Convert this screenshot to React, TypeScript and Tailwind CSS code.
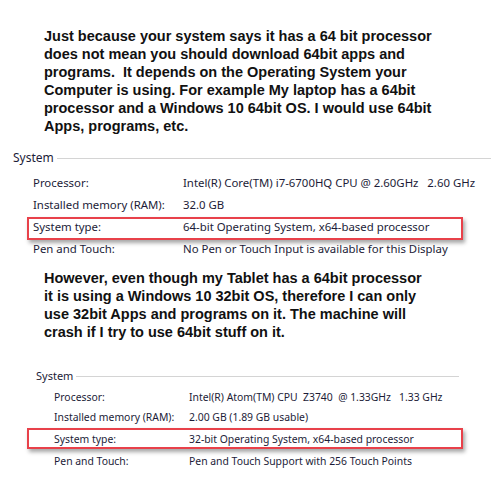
const intro = [
  "Just because your system says it has a 64 bit processor",
  "does not mean you should download 64bit apps and",
  "programs.  It depends on the Operating System your",
  "Computer is using. For example My laptop has a 64bit",
  "processor and a Windows 10 64bit OS. I would use 64bit",
  "Apps, programs, etc.",
];

const tablet = [
  "However, even though my Tablet has a 64bit processor",
  "it is using a Windows 10 32bit OS, therefore I can only",
  "use 32bit Apps and programs on it. The machine will",
  "crash if I try to use 64bit stuff on it.",
];

const laptopRows = [
  { label: "Processor:", value: "Intel(R) Core(TM) i7-6700HQ CPU @ 2.60GHz   2.60 GHz" },
  { label: "Installed memory (RAM):", value: "32.0 GB" },
  { label: "System type:", value: "64-bit Operating System, x64-based processor", mark: true },
  { label: "Pen and Touch:", value: "No Pen or Touch Input is available for this Display" },
];

const tabletRows = [
  { label: "Processor:", value: "Intel(R) Atom(TM) CPU  Z3740  @ 1.33GHz   1.33 GHz" },
  { label: "Installed memory (RAM):", value: "2.00 GB (1.89 GB usable)" },
  { label: "System type:", value: "32-bit Operating System, x64-based processor", mark: true },
  { label: "Pen and Touch:", value: "Pen and Touch Support with 256 Touch Points" },
];

const Note = ({ lines }: { lines: string[] }) => (
  <div className="pl-[44px] font-['Liberation_Sans',Arial,sans-serif] font-bold text-[14.5px] leading-[18px] text-[#111]">
    {lines.map((l, i) => (
      <div key={i} className="whitespace-pre">
        {l}
      </div>
    ))}
  </div>
);

export default function App() {
  return (
    <div className="w-[491px] h-[490px] bg-white overflow-hidden pt-[27px]">
      <Note lines={intro} />

      {/* laptop system panel */}
      <div className="mt-[15px] font-['Noto_Sans',sans-serif] text-[11.4px] text-[#1c1c38]">
        <div className="flex items-center h-4 pl-[13px] text-[12px]">
          <span>System</span>
          <div className="flex-1 h-px bg-[#d4d4d4] ml-[3px]" />
        </div>
        <div className="mt-[6px]">
          {laptopRows.map((r) => (
            <div key={r.label} className="relative flex items-center h-[22px] pl-[33px] whitespace-pre">
              <span className="w-[150px]">{r.label}</span>
              <span>{r.value}</span>
              {r.mark && (
                <span className="absolute left-[27px] w-[436px] top-[1px] h-[23px] border-2 border-[#e8414a] shadow-[2px_3px_4px_rgba(0,0,0,0.35)]" />
              )}
            </div>
          ))}
        </div>
      </div>

      <div className="mt-[9px]">
        <Note lines={tablet} />
      </div>

      {/* tablet system panel */}
      <div className="mt-[28px] font-['Noto_Sans',sans-serif] text-[10.4px] text-[#1c1c38]">
        <div className="flex items-center h-[14px] pl-[36px] w-[459px] text-[11px]">
          <span>System</span>
          <div className="flex-1 h-px bg-[#d4d4d4] ml-[3px]" />
        </div>
        <div className="mt-[5px]">
          {tabletRows.map((r) => (
            <div
              key={r.label}
              className={`relative flex items-center pl-[54px] whitespace-pre ${r.mark ? "h-[24px]" : "h-[20px]"}`}
            >
              <span className="w-[135px]">{r.label}</span>
              <span>{r.value}</span>
              {r.mark && (
                <span className="absolute left-[27px] w-[436px] top-0 h-[21px] border-2 border-[#e8414a] shadow-[2px_3px_4px_rgba(0,0,0,0.35)]" />
              )}
            </div>
          ))}
        </div>
      </div>
    </div>
  );
}
